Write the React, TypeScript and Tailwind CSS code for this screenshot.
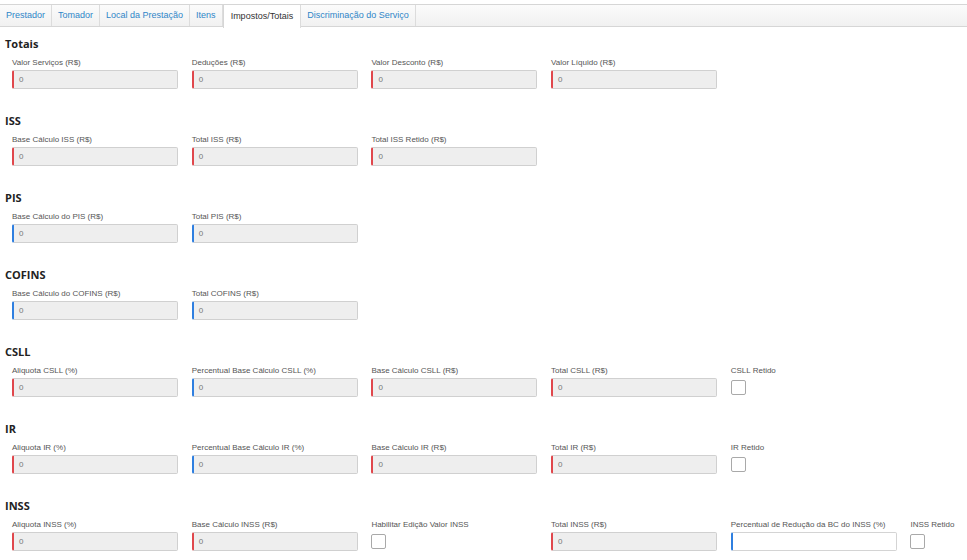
import React from 'react'

type Field = {
	label: string
	kind: 'red' | 'blue' | 'check' | 'blueEmpty'
}

type Group = {
	title: string
	fields: Field[]
}

const tabs = ['Prestador', 'Tomador', 'Local da Prestação', 'Itens', 'Impostos/Totais', 'Discriminação do Serviço']

const groups: Group[] = [
	{
		title: 'Totais',
		fields: [
			{ label: 'Valor Serviços (R$)', kind: 'red' },
			{ label: 'Deduções (R$)', kind: 'red' },
			{ label: 'Valor Desconto (R$)', kind: 'red' },
			{ label: 'Valor Líquido (R$)', kind: 'red' },
		],
	},
	{
		title: 'ISS',
		fields: [
			{ label: 'Base Cálculo ISS (R$)', kind: 'red' },
			{ label: 'Total ISS (R$)', kind: 'red' },
			{ label: 'Total ISS Retido (R$)', kind: 'red' },
		],
	},
	{
		title: 'PIS',
		fields: [
			{ label: 'Base Cálculo do PIS (R$)', kind: 'blue' },
			{ label: 'Total PIS (R$)', kind: 'blue' },
		],
	},
	{
		title: 'COFINS',
		fields: [
			{ label: 'Base Cálculo do COFINS (R$)', kind: 'blue' },
			{ label: 'Total COFINS (R$)', kind: 'blue' },
		],
	},
	{
		title: 'CSLL',
		fields: [
			{ label: 'Aliquota CSLL (%)', kind: 'red' },
			{ label: 'Percentual Base Cálculo CSLL (%)', kind: 'blue' },
			{ label: 'Base Cálculo CSLL (R$)', kind: 'red' },
			{ label: 'Total CSLL (R$)', kind: 'red' },
			{ label: 'CSLL Retido', kind: 'check' },
		],
	},
	{
		title: 'IR',
		fields: [
			{ label: 'Aliquota IR (%)', kind: 'red' },
			{ label: 'Percentual Base Cálculo IR (%)', kind: 'blue' },
			{ label: 'Base Cálculo IR (R$)', kind: 'red' },
			{ label: 'Total IR (R$)', kind: 'red' },
			{ label: 'IR Retido', kind: 'check' },
		],
	},
	{
		title: 'INSS',
		fields: [
			{ label: 'Aliquota INSS (%)', kind: 'red' },
			{ label: 'Base Cálculo INSS (R$)', kind: 'red' },
			{ label: 'Habilitar Edição Valor INSS', kind: 'check' },
			{ label: 'Total INSS (R$)', kind: 'red' },
			{ label: 'Percentual de Redução da BC do INSS (%)', kind: 'blueEmpty' },
			{ label: 'INSS Retido', kind: 'check' },
		],
	},
]

const FieldBox = ({ field }: { field: Field }) => {
	if (field.kind === 'check') {
		return <div className="mt-[3px] w-[15px] h-[15px] rounded-[2px] border border-[#a9a9a9] bg-white" />
	}
	if (field.kind === 'blueEmpty') {
		return <div className="mt-[1px] w-[166px] h-[19px] rounded-[2px] border border-[#d4d4d4] border-l-2 border-l-[#2f7fe0] bg-white" />
	}
	const left = field.kind === 'red' ? 'border-l-[#e0474c]' : 'border-l-[#2f7fe0]'
	return (
		<div className={`mt-[1px] w-[166px] h-[19px] rounded-[2px] border border-[#d0d0d0] border-l-2 ${left} bg-[#eeeeee] flex items-center pl-[5px] text-[8px] text-[#777]`}>
			0
		</div>
	)
}

export default function App() {
	return (
		<div className="w-[967px] h-[560px] overflow-hidden bg-white pt-[4px]" style={{ fontFamily: '"Liberation Sans", Arial, sans-serif' }}>
			<div className="flex h-[23px] border-t border-b border-[#d6d6d6] bg-gradient-to-b from-[#fbfbfb] to-[#f1f1f1]">
				{tabs.map((t) => {
					const active = t === 'Impostos/Totais'
					return (
						<div
							key={t}
							className={`flex items-center text-[9px] border-r border-[#dcdcdc] ${
								active ? 'bg-white text-[#333] h-[23px] -mb-px border-l border-l-[#d6d6d6] px-[7px]' : 'text-[#2f86c8] px-[6px]'
							}`}
						>
							{t}
						</div>
					)
				})}
			</div>
			<div className="pt-[9px]">
				{groups.map((g) => (
					<div key={g.title} className="mb-[24px]">
						<div className="h-[16px] leading-[16px] pl-[5px] text-[11px] font-bold text-[#222]" style={{ fontFamily: '"Open Sans", sans-serif' }}>
							{g.title}
						</div>
						<div className="flex pl-[12px] mt-[5px]">
							{g.fields.map((f) => (
								<div key={f.label} className="w-[179.7px] shrink-0">
									<div className="h-[12px] leading-[12px] text-[8px] text-[#555] whitespace-nowrap">{f.label}</div>
									<FieldBox field={f} />
								</div>
							))}
						</div>
					</div>
				))}
			</div>
		</div>
	)
}
